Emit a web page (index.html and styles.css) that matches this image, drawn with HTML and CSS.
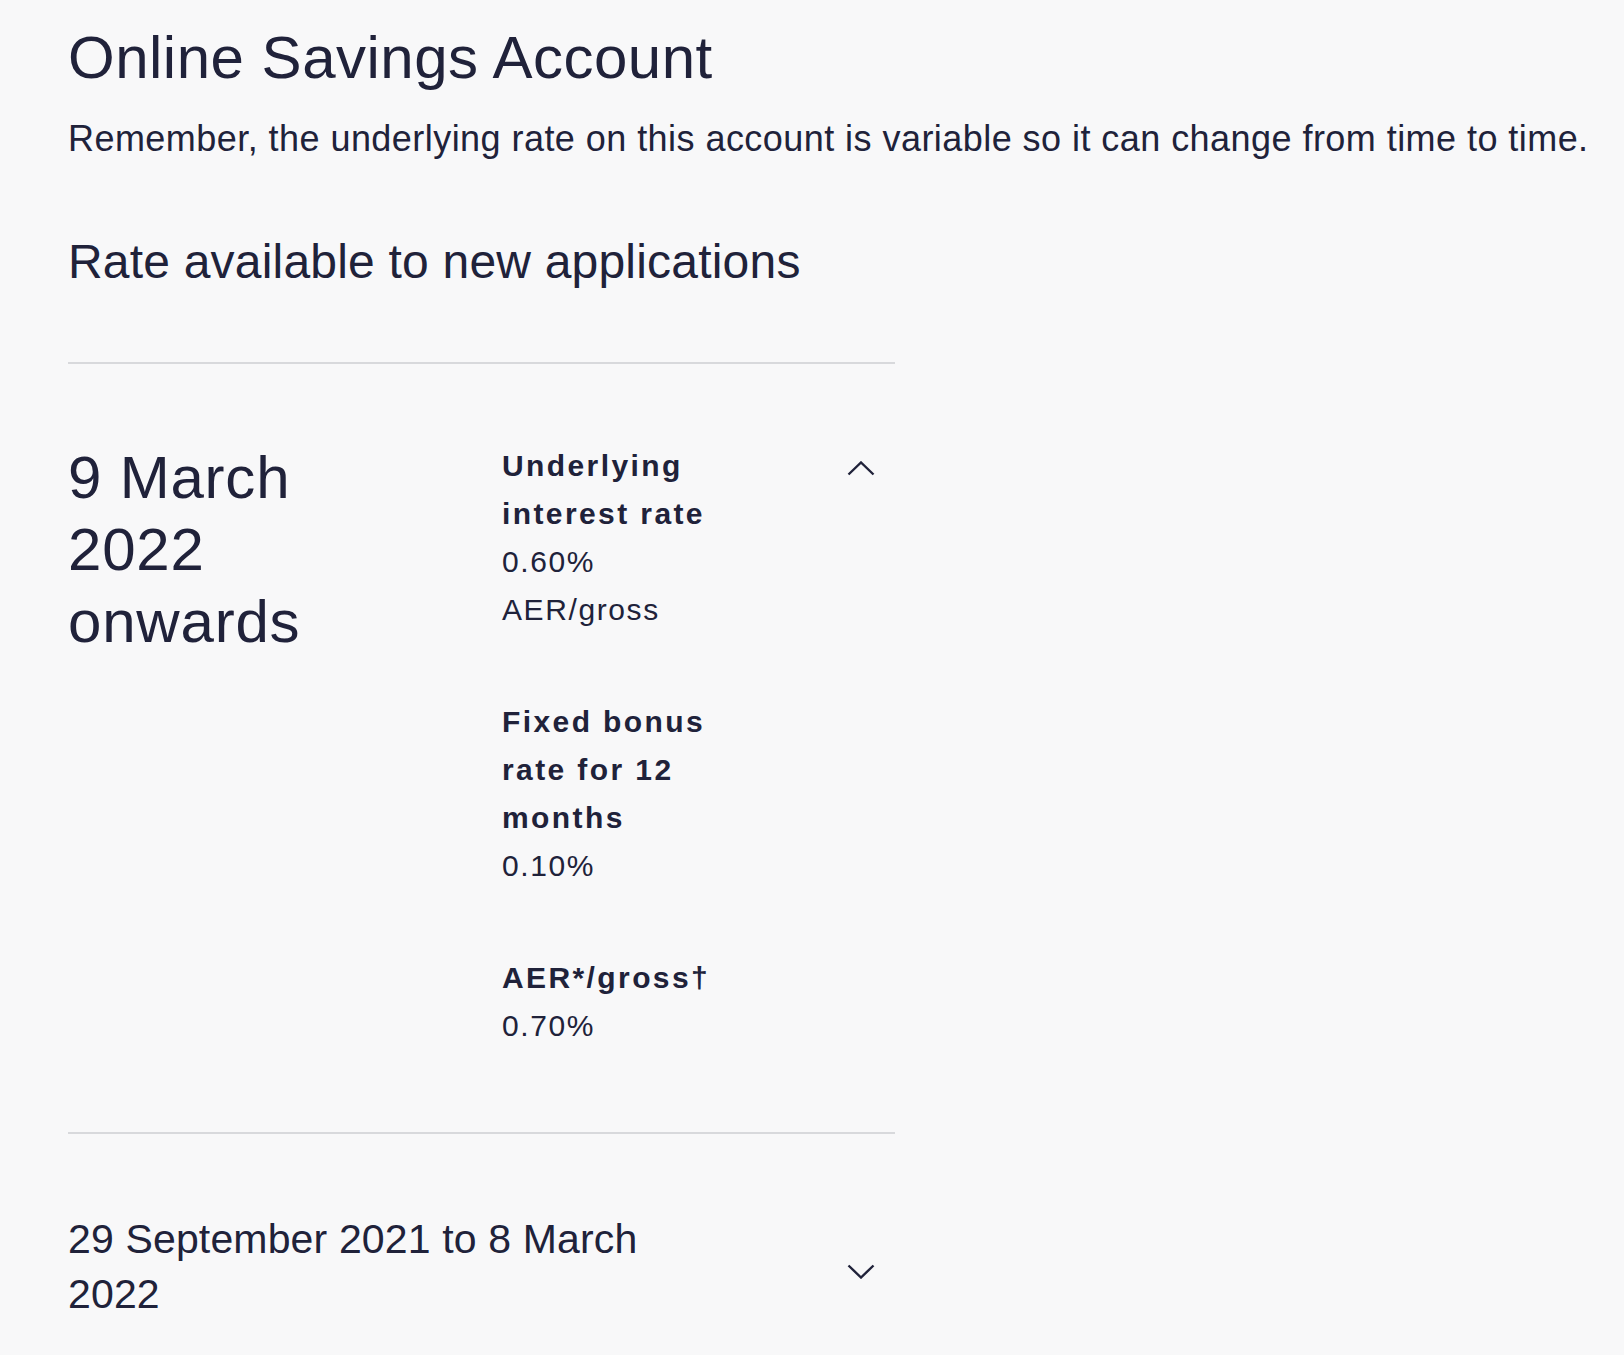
FILE: index.html
```html
<!DOCTYPE html>
<html lang="en">
<head>
    <meta charset="UTF-8">
    <meta name="viewport" content="width=device-width, initial-scale=1.0">
    <title>Online Savings Account</title>
    <link rel="stylesheet" href="styles.css">
</head>
<body>
    <main class="page">
        <h1 class="page-title">Online Savings Account</h1>
        <p class="intro">Remember, the underlying rate on this account is variable so it can change from time to time.</p>

        <h2 class="section-title">Rate available to new applications</h2>

        <div class="rates">
            <div class="rate-item is-open">
                <div class="rate-period">9 March 2022 onwards</div>
                <dl class="rate-details">
                    <div class="rate-group">
                        <dt>Underlying interest rate</dt>
                        <dd>0.60%</dd>
                        <dd>AER/gross</dd>
                    </div>
                    <div class="rate-group">
                        <dt>Fixed bonus rate for 12 months</dt>
                        <dd>0.10%</dd>
                    </div>
                    <div class="rate-group">
                        <dt>AER*/gross&dagger;</dt>
                        <dd>0.70%</dd>
                    </div>
                </dl>
                <button class="toggle" aria-label="Collapse">
                    <svg width="28" height="15" viewBox="0 0 28 15"><polyline points="1.5,13.5 14,1.5 26.5,13.5" fill="none" stroke="#20223a" stroke-width="2.4"/></svg>
                </button>
            </div>

            <div class="rate-item is-closed">
                <div class="rate-period-small">29 September 2021 to 8 March 2022</div>
                <button class="toggle toggle-down" aria-label="Expand">
                    <svg width="28" height="15" viewBox="0 0 28 15"><polyline points="1.5,1.5 14,13.5 26.5,1.5" fill="none" stroke="#20223a" stroke-width="2.4"/></svg>
                </button>
            </div>
        </div>
    </main>
</body>
</html>
```

FILE: styles.css
```css
body { margin: 0; background: #f8f8f9; color: #20223a; font-family: "Liberation Sans", Arial, sans-serif; }
.page { padding: 22px 0 0 68px; }

.page-title { margin: 0; font-size: 60px; line-height: 72px; font-weight: normal; letter-spacing: 0.5px; }
.intro { margin: 18px 0 0; font-size: 36px; line-height: 54px; letter-spacing: 0.45px; }
.section-title { margin: 67px 0 0; font-size: 48px; line-height: 58px; font-weight: normal; letter-spacing: 0.2px; }

.rates { width: 827px; margin-top: 71px; }
.rate-item { border-top: 2px solid #d8d9dc; }

.is-open { display: grid; grid-template-columns: 434px 1fr auto; padding: 78px 0 82px; }
.rate-period { width: 300px; font-size: 60px; line-height: 72px; letter-spacing: 0.8px; }

.rate-details { margin: 0; width: 245px; }
.rate-group + .rate-group { margin-top: 64px; }
.rate-details dt { font-size: 30px; line-height: 48px; font-weight: bold; letter-spacing: 2.4px; }
.rate-details dd { margin: 0; font-size: 30px; line-height: 48px; letter-spacing: 1.6px; }

.toggle { background: none; border: none; padding: 0; margin: 19px 20px 0 0; height: 15px; cursor: pointer; align-self: start; }
.toggle svg { display: block; }

.is-closed { display: flex; align-items: center; justify-content: space-between; padding: 78px 0 40px; }
.rate-period-small { width: 640px; font-size: 41px; line-height: 55px; letter-spacing: 0.15px; }
.toggle-down { margin: 9px 20px 0 0; align-self: center; }
```
